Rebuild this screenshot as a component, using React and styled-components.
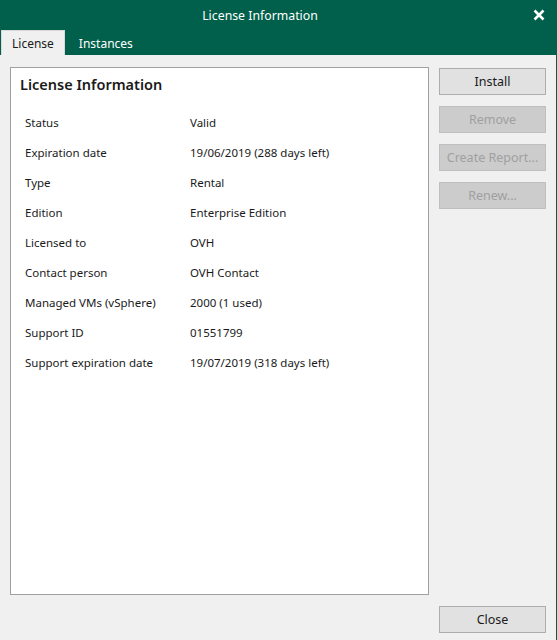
import styled, { createGlobalStyle } from "styled-components";

const GlobalStyle = createGlobalStyle`
  html, body {
    margin: 0;
    padding: 0;
    background: #f0f0f0;
  }
  * {
    box-sizing: border-box;
  }
`;

const rows = [
  ["Status", "Valid"],
  ["Expiration date", "19/06/2019 (288 days left)"],
  ["Type", "Rental"],
  ["Edition", "Enterprise Edition"],
  ["Licensed to", "OVH"],
  ["Contact person", "OVH Contact"],
  ["Managed VMs (vSphere)", "2000 (1 used)"],
  ["Support ID", "01551799"],
  ["Support expiration date", "19/07/2019 (318 days left)"],
];

const StyledWindow = styled.div`
  width: 557px;
  height: 640px;
  display: flex;
  flex-direction: column;
  font-family: "Noto Sans", "Open Sans", sans-serif;
  font-size: 11.5px;
  color: #1a1a1a;
  background: #f0f0f0;
  border-right: 1px solid #00604b;
`;

const StyledTitleBar = styled.div`
  height: 30px;
  background: #00604b;
  color: #ffffff;
  display: flex;
  align-items: center;
  justify-content: center;
  position: relative;
  padding-right: 36px;
  font-size: 12.3px;
`;

const StyledCloseIcon = styled.svg`
  position: absolute;
  right: 11px;
  top: 9px;
`;

const StyledTabStrip = styled.div`
  height: 25px;
  background: #00604b;
  display: flex;
  align-items: flex-end;
  padding-left: 1px;
`;

const StyledTab = styled.div`
  height: 25px;
  display: flex;
  align-items: center;
  padding: 0 ${({ $active }) => ($active ? "10px" : "13px")};
  font-size: 12px;
  background: ${({ $active }) => ($active ? "#f0f0f0" : "transparent")};
  color: ${({ $active }) => ($active ? "#1a1a1a" : "#ffffff")};
  border: 1px solid ${({ $active }) => ($active ? "#d9d9d9" : "transparent")};
  border-bottom: none;
`;

const StyledBody = styled.div`
  flex: 1;
  display: grid;
  grid-template-columns: 1fr 107px;
  grid-template-rows: 1fr auto;
  column-gap: 10px;
  row-gap: 11px;
  padding: 12px 10px 7px 10px;
`;

const StyledPanel = styled.div`
  background: #ffffff;
  border: 1px solid #a0a0a0;
  padding: 6px 9px;
`;

const StyledHeading = styled.div`
  font-size: 14.5px;
  font-weight: 600;
  margin-bottom: 13px;
`;

const StyledRow = styled.div`
  display: grid;
  grid-template-columns: 165px 1fr;
  height: 30px;
  align-items: center;
  padding-left: 5px;
`;

const StyledButtonColumn = styled.div`
  display: flex;
  flex-direction: column;
  gap: 11px;
  padding-top: 1px;
`;

const StyledButton = styled.button`
  height: 27px;
  width: 107px;
  font-family: inherit;
  font-size: 12.5px;
  padding: 0;
  background: ${({ disabled }) => (disabled ? "#cccccc" : "#e1e1e1")};
  border: 1px solid ${({ disabled }) => (disabled ? "#bfbfbf" : "#adadad")};
  color: ${({ disabled }) => (disabled ? "#a0a0a0" : "#1a1a1a")};
`;

const StyledFooter = styled.div`
  grid-column: 2;
`;

const App = () => {
  return (
    <>
      <GlobalStyle />
      <StyledWindow>
        <StyledTitleBar>
          License Information
          <StyledCloseIcon width="12" height="12" viewBox="0 0 12 12">
            <path
              d="M1.5 1.5 L10.5 10.5 M10.5 1.5 L1.5 10.5"
              stroke="#ffffff"
              strokeWidth="2.6"
            />
          </StyledCloseIcon>
        </StyledTitleBar>
        <StyledTabStrip>
          <StyledTab $active>License</StyledTab>
          <StyledTab>Instances</StyledTab>
        </StyledTabStrip>
        <StyledBody>
          <StyledPanel>
            <StyledHeading>License Information</StyledHeading>
            {rows.map(([label, value]) => (
              <StyledRow key={label}>
                <span>{label}</span>
                <span>{value}</span>
              </StyledRow>
            ))}
          </StyledPanel>
          <StyledButtonColumn>
            <StyledButton>Install</StyledButton>
            <StyledButton disabled>Remove</StyledButton>
            <StyledButton disabled>Create Report...</StyledButton>
            <StyledButton disabled>Renew...</StyledButton>
          </StyledButtonColumn>
          <StyledFooter>
            <StyledButton>Close</StyledButton>
          </StyledFooter>
        </StyledBody>
      </StyledWindow>
    </>
  );
};

export default App;
